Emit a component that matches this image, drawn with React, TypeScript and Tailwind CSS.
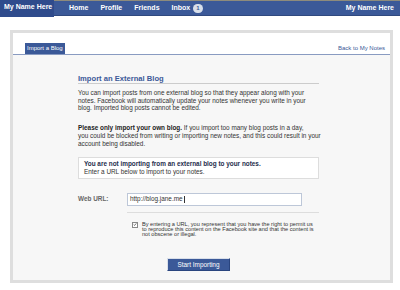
export default function App() {
  const navItems = ['Home', 'Profile', 'Friends'];

  return (
    <div className="w-[400px] h-[290px] bg-white overflow-hidden font-['Liberation_Sans',Arial,sans-serif] text-[#333333]">
      {/* top bar */}
      <div className="flex items-start h-[17px]">
        <div className="w-[54px] h-[17px] bg-[#2f4b8c] text-white text-[7px] font-bold leading-none pl-[4px] pt-[3px] shrink-0">
          My Name Here
        </div>
        <div className="flex-1 h-[16px] bg-[#3b5998] border-t border-[#8d8b7c] border-b border-b-[#30497f] flex items-center text-white text-[7px] font-bold">
          <div className="flex items-center pl-[15px] gap-[12px]">
            {navItems.map((item) => (
              <span key={item}>{item}</span>
            ))}
            <span className="flex items-center gap-[3px]">
              Inbox
              <span className="bg-[#d8dfea] text-[#3b5998] rounded-[5px] px-[3px] text-[6px] leading-[9px]">1</span>
            </span>
          </div>
          <span className="ml-auto pr-[6px]">My Name Here</span>
        </div>
      </div>

      {/* panel */}
      <div className="ml-[10px] mt-[13px] w-[383px] h-[253px] border-[3px] border-[#dedede] flex flex-col">
        <div className="h-[22px] bg-white border-b border-[#899bc1] flex items-end justify-between pl-[12px] pr-[5px] shrink-0">
          <div className="bg-[#3b5998] text-white text-[6px] h-[11px] leading-[11px] px-[2px]">Import a Blog</div>
          <a className="text-[#3b5998] text-[6px] leading-none mb-[3px]">Back to My Notes</a>
        </div>

        <div className="flex-1 bg-[#f7f7f7] pl-[65px] pt-[20px]">
          <div className="w-[241px]">
            <div className="text-[7.6px] font-bold text-[#3b5998] leading-[8px] border-b border-[#cccccc]">
              Import an External Blog
            </div>

            <p className="text-[6.4px] leading-[7.7px] mt-[5px] whitespace-nowrap">
              You can import posts from one external blog so that they appear along with your<br />
              notes. Facebook will automatically update your notes whenever you write in your<br />
              blog. Imported blog posts cannot be edited.
            </p>

            <p className="text-[6.4px] leading-[7.7px] mt-[12px] whitespace-nowrap">
              <span className="font-bold text-[#222222]">Please only import your own blog.</span> If you import too many blog posts in a day,<br />
              you could be blocked from writing or importing new notes, and this could result in your<br />
              account being disabled.
            </p>

            <div className="mt-[10px] bg-white border border-[#dddddd] px-[5px] pt-[2px] pb-[2px] text-[6.4px] leading-[7.7px] whitespace-nowrap">
              <div className="font-bold text-[#1e2d4c]">You are not importing from an external blog to your notes.</div>
              <div>Enter a URL below to import to your notes.</div>
            </div>

            <div className="flex items-center mt-[14px]">
              <span className="w-[49px] text-[6.4px] font-bold text-[#666666]">Web URL:</span>
              <div className="w-[175px] h-[13px] bg-white border border-[#bdc7d8] flex items-center pl-[2px] text-[6.4px]">
                http://blog.jane.me<span className="w-px h-[7px] bg-[#333333] ml-px" />
              </div>
            </div>

            <div className="ml-[49px] mt-[6px] border-t border-[#dddddd] pt-[9px] flex items-start">
              <div className="ml-[5px] w-[6px] h-[6px] border border-[#888888] bg-white flex items-center justify-center shrink-0">
                <svg viewBox="0 0 6 6" className="w-[5px] h-[5px]">
                  <path d="M1 3 L2.4 4.4 L5 1.2" stroke="#333" strokeWidth="1" fill="none" />
                </svg>
              </div>
              <p className="ml-[4px] text-[5.6px] leading-[5.3px] whitespace-nowrap">
                By entering a URL, you represent that you have the right to permit us<br />
                to reproduce this content on the Facebook site and that the content is<br />
                not obscene or illegal.
              </p>
            </div>

            <div className="ml-[89px] mt-[12px]">
              <button className="w-[63px] h-[13px] bg-[#3b5998] border border-[#29447e] border-t-[#d9dfea] border-l-[#d9dfea] text-white text-[6.4px] leading-none">
                Start Importing
              </button>
            </div>
          </div>
        </div>
      </div>
    </div>
  );
}
